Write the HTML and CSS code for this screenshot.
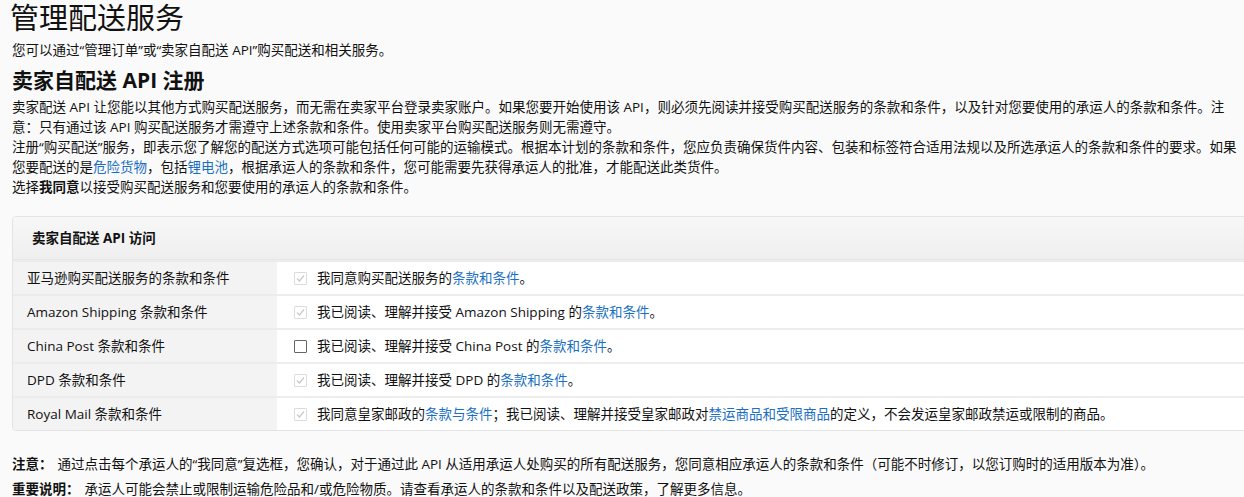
FILE: index.html
```html
<!DOCTYPE html>
<html lang="zh-CN">
<head>
  <meta charset="UTF-8">
  <meta name="viewport" content="width=device-width, initial-scale=1.0">
  <title>管理配送服务</title>
  <link rel="stylesheet" href="styles.css">
</head>
<body>
  <div class="page">
    <h1 class="page-title">管理配送服务</h1>
    <p class="subtitle">您可以通过“管理订单”或“卖家自配送 API”购买配送和相关服务。</p>

    <h2 class="section-title">卖家自配送 API 注册</h2>
    <div class="intro">
      <p>卖家配送 API 让您能以其他方式购买配送服务，而无需在卖家平台登录卖家账户。如果您要开始使用该 API，则必须先阅读并接受购买配送服务的条款和条件，以及针对您要使用的承运人的条款和条件。注意：只有通过该 API 购买配送服务才需遵守上述条款和条件。使用卖家平台购买配送服务则无需遵守。</p>
      <p>注册“购买配送”服务，即表示您了解您的配送方式选项可能包括任何可能的运输模式。根据本计划的条款和条件，您应负责确保货件内容、包装和标签符合适用法规以及所选承运人的条款和条件的要求。如果您要配送的是<a href="#">危险货物</a>，包括<a href="#">锂电池</a>，根据承运人的条款和条件，您可能需要先获得承运人的批准，才能配送此类货件。</p>
      <p>选择<b>我同意</b>以接受购买配送服务和您要使用的承运人的条款和条件。</p>
    </div>

    <!-- API access panel -->
    <div class="panel">
      <div class="panel-header">卖家自配送 API 访问</div>
      <div class="terms-row">
        <div class="terms-label">亚马逊购买配送服务的条款和条件</div>
        <div class="terms-value"><span class="check done"></span>我同意购买配送服务的<a href="#">条款和条件</a>。</div>
      </div>
      <div class="terms-row">
        <div class="terms-label">Amazon Shipping 条款和条件</div>
        <div class="terms-value"><span class="check done"></span>我已阅读、理解并接受 Amazon Shipping 的<a href="#">条款和条件</a>。</div>
      </div>
      <div class="terms-row">
        <div class="terms-label">China Post 条款和条件</div>
        <div class="terms-value"><span class="check"></span>我已阅读、理解并接受 China Post 的<a href="#">条款和条件</a>。</div>
      </div>
      <div class="terms-row">
        <div class="terms-label">DPD 条款和条件</div>
        <div class="terms-value"><span class="check done"></span>我已阅读、理解并接受 DPD 的<a href="#">条款和条件</a>。</div>
      </div>
      <div class="terms-row">
        <div class="terms-label">Royal Mail 条款和条件</div>
        <div class="terms-value"><span class="check done"></span>我同意皇家邮政的<a href="#">条款与条件</a>；我已阅读、理解并接受皇家邮政对<a href="#">禁运商品和受限商品</a>的定义，不会发运皇家邮政禁运或限制的商品。</div>
      </div>
    </div>

    <div class="notes">
      <p><b>注意：</b>通过点击每个承运人的“我同意”复选框，您确认，对于通过此 API 从适用承运人处购买的所有配送服务，您同意相应承运人的条款和条件（可能不时修订，以您订购时的适用版本为准）。</p>
      <p><b>重要说明：</b>承运人可能会禁止或限制运输危险品和/或危险物质。请查看承运人的条款和条件以及配送政策，了解更多信息。</p>
    </div>
  </div>
</body>
</html>
```

FILE: styles.css
```css
html {
  overflow: hidden;
}

body {
  margin: 0;
  background-color: #fafafa;
  color: #111;
  font-family: "Open Sans", "Noto Sans CJK SC", sans-serif;
  font-size: 13.5px;
}

a {
  color: #1a6fc2;
  text-decoration: none;
}

.page {
  padding: 0 4px 0 12px;
}

.page-title {
  margin: 0 0 0 -2px;
  font-size: 29px;
  font-weight: normal;
  line-height: 36px;
}

.subtitle {
  margin: 4px 0 0;
  line-height: 20px;
}

.section-title {
  margin: 6px 0 0;
  font-size: 21px;
  line-height: 28px;
}

.intro {
  margin-top: 3px;
}

.intro p {
  margin: 0;
  line-height: 20px;
}

.panel {
  margin: 19px -30px 0 0;
  border: 1px solid #e3e3e3;
  border-radius: 4px;
  background-color: #fff;
  overflow: hidden;
}

.panel-header {
  height: 42px;
  line-height: 42px;
  padding-left: 19px;
  font-weight: bold;
  background: linear-gradient(#f7f7f7, #efefef);
  border-bottom: 1px solid #e6e6e6;
}

.terms-row {
  display: flex;
  border-top: 2px solid #ececec;
}

.terms-row:first-of-type {
  border-top: none;
}

.terms-label {
  width: 250px;
  padding: 1px 0 0 14px;
  line-height: 31px;
  background-color: #f3f3f3;
}

.terms-value {
  flex: 1;
  display: flex;
  align-items: center;
  padding: 1px 0 0 17px;
  line-height: 31px;
}

.check {
  width: 13px;
  height: 13px;
  margin-right: 10px;
  border: 1px solid #666;
  border-radius: 1px;
  box-sizing: border-box;
  background-color: #fff;
}

.check.done {
  border-color: #dcdcdc;
  background-image: url("data:image/svg+xml;utf8,<svg xmlns='http://www.w3.org/2000/svg' viewBox='0 0 13 13'><path d='M3 6.5 L5.5 9 L10 3.5' fill='none' stroke='%23c8c8c8' stroke-width='1.2'/></svg>");
  background-size: 13px 13px;
  background-position: -1px -1px;
}

.notes {
  margin-top: 21px;
}

.notes p {
  margin: 0;
  line-height: 25px;
}

.notes b {
  margin-right: 5px;
}
```
